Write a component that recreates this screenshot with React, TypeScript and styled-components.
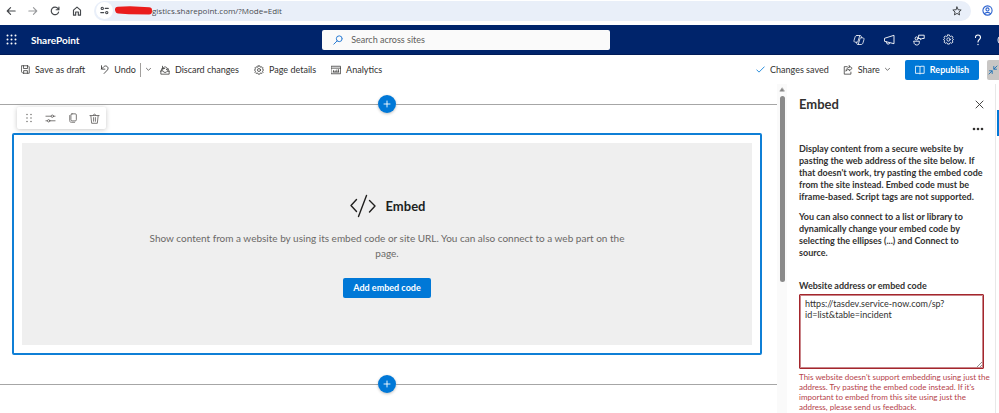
import React from "react";
import styled, { createGlobalStyle } from "styled-components";

const font = 'Lato, "Open Sans", sans-serif';

const GlobalStyle = createGlobalStyle`
  *, *::before, *::after { box-sizing: border-box; }
  body { margin: 0; background: #fff; color: #323130; font: 9px/12px ${font}; overflow: hidden; }
  button, input, textarea { font: inherit; color: inherit; }
  button { border: 0; background: none; padding: 0; cursor: pointer; }
  h1, h2, p { margin: 0; }
`;

const Page = styled.div`
  display: flex;
  flex-direction: column;
  height: 100vh;
`;

const Glyph = styled.svg<{ $w?: number; $h?: number }>`
  display: block;
  flex: none;
  width: ${(p) => p.$w ?? 12}px;
  height: ${(p) => p.$h ?? p.$w ?? 12}px;
  fill: none;
  stroke: currentColor;
  stroke-width: 1;
  stroke-linecap: round;
  stroke-linejoin: round;
`;

/* Browser bar */
const BrowserBar = styled.div`
  display: flex;
  align-items: center;
  flex: none;
  height: 25px;
  padding: 0 6px 4px 0;
  color: #45484c;
`;

const NavButton = styled.button<{ $muted?: boolean }>`
  display: grid;
  place-items: center;
  width: 22px;
  height: 20px;
  opacity: ${(p) => (p.$muted ? 0.55 : 1)};
`;

const AddressBar = styled.label`
  display: flex;
  align-items: center;
  flex: 1;
  height: 20px;
  margin-left: 6px;
  padding: 0 9px 0 2px;
  border-radius: 10px;
  background: #e9eff9;
`;

const SiteInfo = styled.span`
  display: grid;
  place-items: center;
  width: 17px;
  height: 17px;
  margin-right: 1px;
  border-radius: 50%;
  background: #fff;
`;

const AddressInput = styled.input`
  flex: 1;
  min-width: 0;
  height: 16px;
  padding: 0;
  border: 0;
  outline: 0;
  background: none;
  color: #4a4d52;
  font-family: "Open Sans", sans-serif;
  font-size: 8px;
`;

const ProfileButton = styled.button`
  display: grid;
  place-items: center;
  width: 12px;
  height: 20px;
  margin-left: 10px;
  color: #2b62cf;
`;

/* Suite header */
const SuiteBar = styled.header`
  display: grid;
  grid-template-columns: minmax(0, 29fr) 288px minmax(0, 35fr);
  align-items: center;
  flex: none;
  height: 30px;
  background: #00246b;
  border-bottom: 1px solid #001b57;
  color: #fff;
`;

const SuiteStart = styled.div`
  display: flex;
  align-items: center;
  gap: 14px;
  padding-left: 6px;
`;

const Brand = styled.a`
  color: #fff;
  font-size: 10px;
  font-weight: 700;
  text-decoration: none;
`;

const SearchBox = styled.label`
  display: flex;
  align-items: center;
  gap: 8px;
  height: 20px;
  padding: 0 11px;
  border-radius: 2px;
  background: #fafafa;
  color: #2b7cd3;
`;

const SearchInput = styled.input`
  flex: 1;
  padding: 0;
  border: 0;
  outline: 0;
  background: none;
  color: #605e5c;
  &::placeholder { color: #605e5c; opacity: 1; }
`;

const SuiteEnd = styled.div`
  display: flex;
  justify-content: flex-end;
  gap: 18px;
`;

const Avatar = styled.button`
  width: 2px;
  margin-left: -5px;
  overflow: hidden;
`;

/* Command bar */
const CommandBar = styled.div`
  display: flex;
  align-items: center;
  flex: none;
  height: 29px;
  padding-left: 21px;
`;

const Command = styled.button<{ $space?: number }>`
  display: flex;
  align-items: center;
  gap: 5px;
  height: 20px;
  margin-right: ${(p) => p.$space ?? 15}px;
  white-space: nowrap;
`;

const Split = styled.span`
  width: 1px;
  height: 14px;
  background: #a19f9d;
`;

const Spacer = styled.div`
  flex: 1;
`;

const Status = styled.span`
  display: flex;
  align-items: center;
  gap: 5px;
  margin-right: 14px;
  white-space: nowrap;
`;

const PrimaryButton = styled.button`
  display: flex;
  align-items: center;
  justify-content: center;
  gap: 5px;
  height: 20px;
  padding: 0 10px;
  border-radius: 2px;
  background: #0078d7;
  color: #fff;
  font-weight: 700;
  white-space: nowrap;
`;

const CollapseButton = styled.button`
  display: grid;
  place-items: center;
  width: 12px;
  height: 20px;
  margin-left: 8px;
  border-radius: 2px 0 0 2px;
  background: #c8c6c4;
  color: #1a6fb5;
`;

/* Workspace */
const Workspace = styled.div`
  display: flex;
  flex: 1;
  min-height: 0;
`;

const Canvas = styled.main`
  flex: 1;
  min-width: 0;
  padding-top: 11px;
`;

const SectionLine = styled.div`
  display: flex;
  align-items: center;
  height: 18px;
  &::before, &::after {
    content: "";
    flex: 1 1 0;
    height: 1px;
    background: #a6a6a6;
  }
  &::after { flex-basis: 3px; }
`;

const AddButton = styled.button`
  display: grid;
  place-items: center;
  width: 18px;
  height: 18px;
  border-radius: 50%;
  background: #0078d7;
  color: #fff;
  box-shadow: 0 1px 3px rgba(0, 0, 0, 0.25);
`;

const PartTools = styled.div`
  display: flex;
  align-items: center;
  justify-content: space-between;
  position: relative;
  width: 89px;
  height: 22px;
  margin: -6px 0 4px 17px;
  padding: 0 6px;
  border-radius: 2px;
  background: #fff;
  color: #605e5c;
  box-shadow: 0 1px 5px rgba(0, 0, 0, 0.22);
`;

const ToolButton = styled.button`
  display: grid;
  place-items: center;
  width: 11px;
  height: 20px;
`;

const Frame = styled.section`
  margin: 0 15px 20px 12px;
  padding: 8px;
  border: 2px solid #0f7fd6;
  border-radius: 2px;
`;

const Placeholder = styled.div`
  display: flex;
  flex-direction: column;
  align-items: center;
  min-height: 202px;
  padding: 51px 120px 46px;
  background: #efefef;
`;

const PlaceholderTitle = styled.h2`
  display: flex;
  align-items: center;
  gap: 9px;
  color: #201f1e;
  font-size: 13px;
  line-height: 24px;
  font-weight: 700;
`;

const PlaceholderText = styled.p`
  margin: 13px 0 17px;
  color: #6b6967;
  font-size: 10px;
  line-height: 15px;
  text-align: center;
`;

const ScrollTrack = styled.div`
  display: flex;
  flex-direction: column;
  align-items: center;
  flex: none;
  gap: 4px;
  width: 10px;
  padding-top: 3px;
  background: #fafafa;
  color: #858585;
`;

const ScrollThumb = styled.div`
  width: 5px;
  height: 186px;
  border-radius: 3px;
  background: #8a8a8a;
`;

const Panel = styled.aside`
  flex: none;
  width: 209px;
  padding: 12px 11px 0 12px;
  border-right: 1px solid #e8e8e8;
`;

const PanelHead = styled.div`
  display: flex;
  align-items: center;
  justify-content: space-between;
  height: 16px;
`;

const PanelTitle = styled.h1`
  font-size: 13px;
  line-height: 16px;
  font-weight: 700;
`;

const MoreButton = styled.button`
  display: block;
  margin: 11px 0 0 auto;
  height: 12px;
`;

const PanelText = styled.p`
  margin-bottom: 8px;
  font-weight: 700;
`;

const Description = styled.div`
  margin: 8px -3px 21px 0;
`;

const FieldLabel = styled.label`
  display: block;
  margin-bottom: 2px;
  font-weight: 700;
`;

const TextAreaWrap = styled.div`
  position: relative;
`;

const CodeArea = styled.textarea`
  display: block;
  width: 100%;
  height: 75px;
  padding: 3px 5px;
  border: 1px solid #a4262c;
  border-radius: 1px;
  box-shadow: inset 0 0 0 1px #c98489;
  outline: 0;
  resize: none;
  line-height: 11px;
`;

const Grip = styled(Glyph)`
  position: absolute;
  right: 2px;
  bottom: 2px;
  color: #605e5c;
`;

const ErrorText = styled.p`
  margin: 3px -10px 0 0;
  color: #b5434a;
  font-size: 8px;
  line-height: 10px;
`;

const Rail = styled.div`
  flex: none;
  width: 3px;
  padding: 26px 0 0 1px;
`;

const RailMarker = styled.div`
  height: 26px;
  background: #0078d7;
`;

const Gear = ({ size }: { size: number }) => (
  <Glyph $w={size} viewBox="0 0 24 24">
    <g strokeWidth="1.800">
      <path d="M10 2h4l.8 2.800 1.800.8 2.500-1.400 2.700 2.700-1.400 2.500.8 1.800L23 12l-1.800 1.300-.8 1.900 1.400 2.400-2.700 2.700-2.500-1.400-1.800.8L14 22h-4l-.8-2.300-1.800-.8-2.500 1.400-2.700-2.700 1.400-2.400-.8-1.900L1 12l1.800-.8.8-1.800-1.400-2.500 2.700-2.700 2.500 1.400 1.800-.8z" />
      <circle cx="12" cy="12" r="3.600" />
    </g>
  </Glyph>
);

const Chevron = () => (
  <Glyph $w={5} viewBox="0 0 6 6"><path d="M.5 1.500 3 4l2.500-2.500" strokeWidth=".8" /></Glyph>
);

export default function App() {
  return (
    <Page>
      <GlobalStyle />
      <BrowserBar>
        <NavButton aria-label="Back">
          <Glyph $w={10} viewBox="0 0 12 12"><path d="M11 6H1.500M5.500 2l-4 4 4 4" strokeWidth="1.400" /></Glyph>
        </NavButton>
        <NavButton aria-label="Forward" $muted>
          <Glyph $w={10} viewBox="0 0 12 12"><path d="M1 6h9.500M6.500 2l4 4-4 4" strokeWidth="1.300" /></Glyph>
        </NavButton>
        <NavButton aria-label="Reload">
          <Glyph $w={10} viewBox="0 0 12 12"><path d="M10.300 7.300A4.500 4.500 0 1 1 9.600 3.200L10.600 4.400M10.700 1.200v3.300H7.400" strokeWidth="1.400" /></Glyph>
        </NavButton>
        <NavButton aria-label="Home">
          <Glyph $w={10} viewBox="0 0 12 12"><path d="M1.800 5 6 1.300 10.200 5v6H7.600V7.200H4.400V11H1.800z" strokeWidth="1.400" /></Glyph>
        </NavButton>
        <AddressBar>
          <SiteInfo>
            <Glyph $w={9} viewBox="0 0 12 12"><g strokeWidth="1.500"><circle cx="3" cy="3.200" r="1.500" /><path d="M7 3.200h4M1 8.800h4" /><circle cx="9" cy="8.800" r="1.500" /></g></Glyph>
          </SiteInfo>
          <Glyph $w={38} $h={10} viewBox="0 0 38 10">
            <path d="M4 3.700 16 3.300 35 4.200M4.500 4.500 15 5.300 35 5.500" stroke="#ea1c1c" strokeWidth="6" />
          </Glyph>
          <AddressInput aria-label="Address" defaultValue="gistics.sharepoint.com/?Mode=Edit" />
          <Glyph $w={10} viewBox="0 0 12 12"><path d="m6 1.200 1.400 3.300 3.600.3-2.700 2.400.8 3.500L6 8.900l-3.100 1.800.8-3.500L1 4.800l3.600-.3z" strokeWidth="1.200" /></Glyph>
        </AddressBar>
        <ProfileButton aria-label="Profile">
          <Glyph $w={11} viewBox="0 0 12 12"><g strokeWidth="1.200"><circle cx="6" cy="6" r="5" /><circle cx="6" cy="4.800" r="1.700" /><path d="M2.700 9.500c1.600-2 5-2 6.600 0" /></g></Glyph>
        </ProfileButton>
      </BrowserBar>

      <SuiteBar>
        <SuiteStart>
          <button aria-label="App launcher">
            <Glyph $w={11} viewBox="0 0 11 11">
              {[1.5, 5.5, 9.5].map((y) => [1.5, 5.5, 9.5].map((x) => (
                <circle key={`${x}-${y}`} cx={x} cy={y} r="1" fill="#fff" stroke="none" />
              )))}
            </Glyph>
          </button>
          <Brand href="#">SharePoint</Brand>
        </SuiteStart>
        <SearchBox>
          <Glyph $w={10} viewBox="0 0 12 12"><path d="M5 7 1 11M11 4.500a3.500 3.500 0 1 1-7 0 3.500 3.500 0 0 1 7 0" strokeWidth="1.200" /></Glyph>
          <SearchInput aria-label="Search across sites" placeholder="Search across sites" />
        </SearchBox>
        <SuiteEnd>
          <button aria-label="Copilot">
            <Glyph $w={12} viewBox="0 0 12 12"><path d="M4 1.500h3.200c.6 0 .9.500 1.100 1l.4 1.300h1c1.200 0 1.500 1 1.200 2L10 8.800c-.3 1.100-.9 1.700-2 1.700H4.800c-.6 0-.9-.4-1.100-1l-.4-1.300h-1c-1.200 0-1.500-1-1.200-2L2 3.200c.3-1.100.9-1.700 2-1.700zM6.700 1.800 4.800 8c-.2.300-.5.300-1.500.2M5.300 10.200 7.200 4c.2-.3.5-.3 1.500-.2" strokeWidth=".8" /></Glyph>
          </button>
          <button aria-label="Announcements">
            <Glyph $w={12} viewBox="0 0 12 12"><path d="M11 1.700v8L1.500 7.300V4.700zM3.500 8v.8c.2 1.700 3 1.700 3.200.6" strokeWidth=".9" /></Glyph>
          </button>
          <button aria-label="Feedback">
            <Glyph $w={12} viewBox="0 0 12 12"><g strokeWidth=".9"><path d="M6 1.200h5.200v3.300H9L7.500 5.700V4.500H6z" /><circle cx="3.600" cy="4.400" r="1.500" /><path d="M1 7.200h5.300v1.600c0 3-5.300 3-5.300 0z" /></g></Glyph>
          </button>
          <button aria-label="Settings"><Gear size={11} /></button>
          <button aria-label="Help">
            <Glyph $w={12} viewBox="0 0 12 12"><path d="M3.500 3.500c0-3.300 5-3.300 5 0C8.500 5.500 6 5.500 6 8" strokeWidth="1.100" /><circle cx="6" cy="10.500" r=".7" fill="#fff" stroke="none" /></Glyph>
          </button>
          <Avatar aria-label="Account">
            <Glyph $w={12} viewBox="0 0 12 12"><circle cx="6" cy="6" r="5" /></Glyph>
          </Avatar>
        </SuiteEnd>
      </SuiteBar>

      <CommandBar>
        <Command>
          <Glyph $w={9} viewBox="0 0 12 12"><path d="M1 1h8.500L11 2.500V11H2.500L1 9.500zM3.300 1v3.700h5.400V1M3.500 11V7.500h5V11" /></Glyph>
          Save as draft
        </Command>
        <Command $space={4}>
          <Glyph $w={9} viewBox="0 0 12 12"><path d="M2 1v4.500h4.500M2 5.300 5 2.300C8-.5 12.500 3 10 6.500L5.500 11.300" strokeWidth="1.100" /></Glyph>
          Undo
        </Command>
        <Split />
        <Command aria-label="Undo options" $space={9}><span /><Chevron /></Command>
        <Command>
          <Glyph $w={10} viewBox="0 0 12 12"><path d="M1 7.500 2.500 4M11 7.500 9.500 4M1 7.500V11h10V7.500H8.500C8 9.500 4 9.500 3.500 7.500zM3.200 6C2.500 1 9.500 1 8.800 5.500M3 1.500v2.700h2.500M8.800 6.500 7.500 5" strokeWidth=".9" /></Glyph>
          Discard changes
        </Command>
        <Command>
          <Gear size={10} />
          Page details
        </Command>
        <Command>
          <Glyph $w={10} viewBox="0 0 12 12"><path d="M.5 1.500h11v9H.5zM.5 3.800h11M2.500 8.500h7M3 8V6.700M5 8V7M7 8V6M9 8V5.500" strokeWidth=".9" /></Glyph>
          Analytics
        </Command>
        <Spacer />
        <Status>
          <Glyph $w={9} viewBox="0 0 12 12" color="#0078d4"><path d="m1 6.500 3 3 7-7" strokeWidth="1.100" /></Glyph>
          Changes saved
        </Status>
        <Command $space={15}>
          <Glyph $w={10} viewBox="0 0 12 12"><path d="M5 2H1.500v9h8V8.500M7.500 1l3.500 3-3.500 3V5.300C5.500 5.300 4.300 6 3.500 7.500 3.700 4.500 5.500 2.800 7.500 2.800z" strokeWidth=".9" /></Glyph>
          Share
          <Chevron />
        </Command>
        <PrimaryButton>
          <Glyph $w={10} viewBox="0 0 12 12"><path d="M1 1.500h4l1 .7 1-.7h4v8.500H7l-1 .7-1-.7H1zM6 2.200v8.500" /></Glyph>
          Republish
        </PrimaryButton>
        <CollapseButton aria-label="Collapse">
          <Glyph $w={10} viewBox="0 0 10 10"><path d="M1 9l3-3M1.500 5.800H4.200V8.500M9 1 6 4M5.800 1.500V4.200H8.500" strokeWidth=".9" /></Glyph>
        </CollapseButton>
      </CommandBar>

      <Workspace>
        <Canvas>
          <SectionLine>
            <AddButton aria-label="Add section above">
              <Glyph $w={8} viewBox="0 0 8 8"><path d="M4 1v6M1 4h6" strokeWidth=".9" /></Glyph>
            </AddButton>
          </SectionLine>
          <PartTools>
            <ToolButton aria-label="Move">
              <Glyph $w={10} viewBox="0 0 10 10">
                {[1.5, 5, 8.5].map((y) => [3, 7].map((x) => (
                  <circle key={`${x}-${y}`} cx={x} cy={y} r=".7" fill="currentColor" stroke="none" />
                )))}
              </Glyph>
            </ToolButton>
            <ToolButton aria-label="Edit properties">
              <Glyph $w={11} viewBox="0 0 12 12"><g strokeWidth=".9"><path d="M1 3.500h5.500M9.500 3.500H11M1 8.500h1.500M5.500 8.500H11" /><circle cx="8" cy="3.500" r="1.300" /><circle cx="4" cy="8.500" r="1.300" /></g></Glyph>
            </ToolButton>
            <ToolButton aria-label="Duplicate">
              <Glyph $w={10} viewBox="0 0 12 12"><rect x="3.500" y="1" width="6.500" height="8.500" rx="1.300" /><path d="M2 3v6c0 1.500.7 2.200 2 2.200h4" strokeWidth=".9" /></Glyph>
            </ToolButton>
            <ToolButton aria-label="Delete">
              <Glyph $w={11} viewBox="0 0 12 12"><path d="M1 2.800h10M4.500 2.800c0-2.200 3-2.200 3 0M2 2.800l.9 8.400h6.200l.9-8.400M5 5v4M7 5v4" strokeWidth=".9" /></Glyph>
            </ToolButton>
          </PartTools>
          <Frame>
            <Placeholder>
              <PlaceholderTitle>
                <Glyph $w={28} $h={24} viewBox="0 0 28 24"><path d="M7.500 5.500 2 11.500l5.500 6M17.500 1.500l-8 21M20.500 6.500l5.500 5.500-5.500 6" strokeWidth="1.400" /></Glyph>
                Embed
              </PlaceholderTitle>
              <PlaceholderText>
                Show content from a website by using its embed code or site URL. You can also connect to a web part on the page.
              </PlaceholderText>
              <PrimaryButton>Add embed code</PrimaryButton>
            </Placeholder>
          </Frame>
          <SectionLine>
            <AddButton aria-label="Add section below">
              <Glyph $w={8} viewBox="0 0 8 8"><path d="M4 1v6M1 4h6" strokeWidth=".9" /></Glyph>
            </AddButton>
          </SectionLine>
        </Canvas>
        <ScrollTrack>
          <Glyph $w={6} $h={5} viewBox="0 0 6 5"><path d="M3 1 .8 4.200h4.400z" fill="currentColor" strokeWidth=".5" /></Glyph>
          <ScrollThumb />
        </ScrollTrack>
        <Panel>
          <PanelHead>
            <PanelTitle>Embed</PanelTitle>
            <button aria-label="Close">
              <Glyph $w={9} viewBox="0 0 9 9"><path d="m1 1 7 7M8 1 1 8" strokeWidth=".9" /></Glyph>
            </button>
          </PanelHead>
          <MoreButton aria-label="More options">
            <Glyph $w={12} $h={4} viewBox="0 0 12 4">
              {[2, 6, 10].map((x) => <circle key={x} cx={x} cy="2" r="1.300" fill="currentColor" stroke="none" />)}
            </Glyph>
          </MoreButton>
          <Description>
            <PanelText>
              Display content from a secure website by pasting the web address of the site below. If that doesn't work, try pasting the embed code from the site instead. Embed code must be iframe-based. Script tags are not supported.
            </PanelText>
            <PanelText>
              You can also connect to a list or library to dynamically change your embed code by selecting the ellipses (...) and Connect to source.
            </PanelText>
          </Description>
          <FieldLabel htmlFor="embed-code">Website address or embed code</FieldLabel>
          <TextAreaWrap>
            <CodeArea id="embed-code" aria-invalid="true" aria-describedby="embed-error" defaultValue="https://tasdev.service-now.com/sp?id=list&table=incident" />
            <Grip $w={5} viewBox="0 0 5 5"><path d="M0 5 5 0M3 5l2-2" strokeWidth=".7" /></Grip>
          </TextAreaWrap>
          <ErrorText id="embed-error">
            This website doesn't support embedding using just the address. Try pasting the embed code instead. If it's important to embed from this site using just the address, please send us feedback.
          </ErrorText>
        </Panel>
        <Rail><RailMarker /></Rail>
      </Workspace>
    </Page>
  );
}
